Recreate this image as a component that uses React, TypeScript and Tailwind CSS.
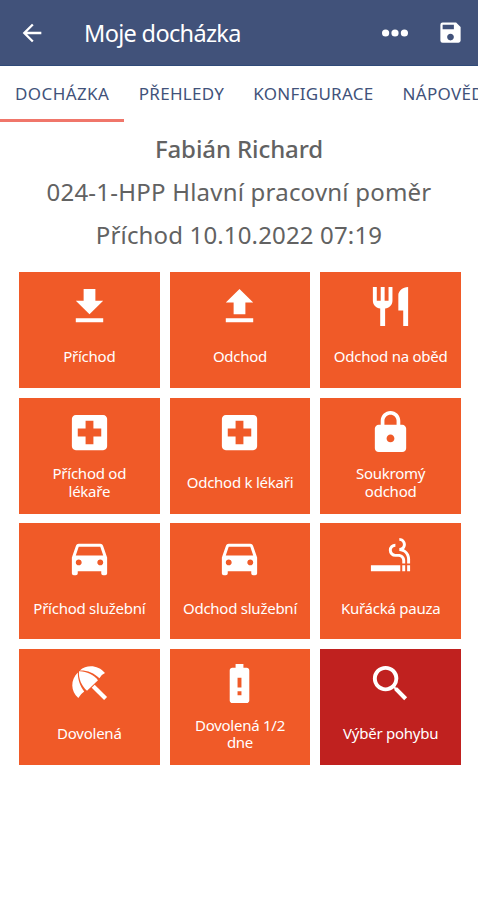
import React from "react";
import type { IconType } from "react-icons";
import {
  MdArrowBack,
  MdBatteryAlert,
  MdDirectionsCar,
  MdLocalHospital,
  MdLock,
  MdRestaurant,
  MdSave,
  MdSearch,
  MdSmokingRooms,
} from "react-icons/md";

type IconProps = { className?: string };

function ArrivalIcon({ className }: IconProps) {
  return (
    <svg viewBox="0 0 24 24" fill="currentColor" className={className}>
      <path d="M19 9h-4V3H9v6H5l7 7 7-7zM5 18v2h14v-2H5z" />
    </svg>
  );
}

function LeaveIcon({ className }: IconProps) {
  return (
    <svg viewBox="0 0 24 24" fill="currentColor" className={className}>
      <path d="M9 16h6v-6h4l-7-7-7 7h4v6zm-4 2h14v2H5v-2z" />
    </svg>
  );
}

function UmbrellaIcon({ className }: IconProps) {
  return (
    <svg viewBox="0 0 47 47" fill="currentColor" className={className}>
      <path d="M12.3 38C4.6 31 4.2 20 11.8 12.4C11.8 20 14.4 26.3 18.2 31.4Q14.6 33.8 12.3 38Z" />
      <path d="M13 11.3C20 11 27.5 14.6 32 20.2L21 30.8C15.8 26.2 12.3 19 13 11.3Z" />
      <path d="M13.8 10.4C21 4.2 32.2 5 39 13Q35.2 14.6 33.4 18.2C28 12.8 21.5 10.2 13.8 10.4Z" />
      <path d="M27.2 26.2L39.6 38.6" stroke="currentColor" strokeWidth="4.2" />
    </svg>
  );
}

type Tile = {
  label: string;
  icon: IconType | React.ComponentType<IconProps>;
  danger?: boolean;
};

const TABS = [
  { label: "DOCHÁZKA", active: true },
  { label: "PŘEHLEDY" },
  { label: "KONFIGURACE" },
  { label: "NÁPOVĚDA" },
];

const TILES: Tile[] = [
  { label: "Příchod", icon: ArrivalIcon },
  { label: "Odchod", icon: LeaveIcon },
  { label: "Odchod na oběd", icon: MdRestaurant },
  { label: "Příchod od lékaře", icon: MdLocalHospital },
  { label: "Odchod k lékaři", icon: MdLocalHospital },
  { label: "Soukromý odchod", icon: MdLock },
  { label: "Příchod služební", icon: MdDirectionsCar },
  { label: "Odchod služební", icon: MdDirectionsCar },
  { label: "Kuřácká pauza", icon: MdSmokingRooms },
  { label: "Dovolená", icon: UmbrellaIcon },
  { label: "Dovolená 1/2 dne", icon: MdBatteryAlert },
  { label: "Výběr pohybu", icon: MdSearch, danger: true },
];

export default function App() {
  return (
    <div className="h-[900px] w-[478px] overflow-hidden bg-white font-['Noto_Sans',sans-serif]">
      <header className="flex h-[66px] items-center border-b border-[#2f4a78] bg-[#41527a] pl-[18px] pr-3.5 text-white">
        <MdArrowBack className="size-7" />
        <h1 className="ml-[38px] pt-0.5 text-[23.5px] font-normal tracking-[-0.67px]">Moje docházka</h1>
        <button type="button" className="ml-auto">
          <svg viewBox="0 0 28 8" fill="currentColor" className="h-2 w-7">
            <circle cx="4.6" cy="4" r="3.6" />
            <circle cx="14" cy="4" r="3.6" />
            <circle cx="23.4" cy="4" r="3.6" />
          </svg>
        </button>
        <button type="button" className="ml-7">
          <MdSave className="size-[27px]" />
        </button>
      </header>

      <nav className="flex h-14 text-[17px] text-[#41527a]">
        {TABS.map((tab) => (
          <div
            key={tab.label}
            className={`flex shrink-0 items-center border-b-[3px] pt-[3px] ${
              tab.active
                ? "border-[#f0766a] px-[15px] tracking-[0.4px]"
                : "border-transparent px-[14.5px] tracking-[0.3px]"
            }`}
          >
            {tab.label}
          </div>
        ))}
      </nav>

      <section className="flex flex-col items-center pt-[5px] text-2xl leading-[43px] text-[#626262]">
        <div className="font-medium tracking-[-0.1px]">Fabián Richard</div>
        <div className="tracking-[0.22px]">024-1-HPP Hlavní pracovní poměr</div>
        <div className="tracking-[0.15px]">Příchod 10.10.2022 07:19</div>
      </section>

      <main className="ml-[19px] mt-4 grid w-[442px] grid-cols-3 gap-x-[10px] gap-y-[9.7px]">
        {TILES.map(({ label, icon: Icon, danger }) => (
          <button
            key={label}
            type="button"
            className={`flex h-[116px] flex-col items-center pt-[11px] text-white ${
              danger ? "bg-[#c0211f]" : "bg-[#f05a28]"
            }`}
          >
            <Icon className="size-[47px] shrink-0" />
            <span className="flex h-[54px] w-[118px] items-center justify-center text-[15px] leading-[17.5px] tracking-[-0.25px]">
              {label}
            </span>
          </button>
        ))}
      </main>
    </div>
  );
}
